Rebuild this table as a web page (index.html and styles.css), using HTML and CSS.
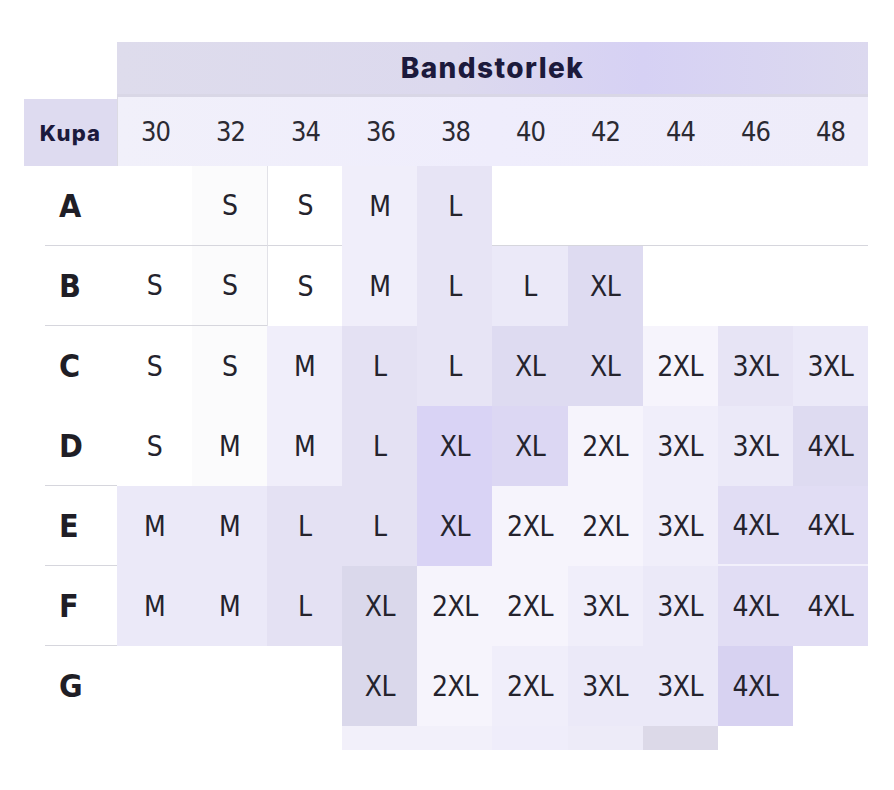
FILE: index.html
```html
<!DOCTYPE html>
<html lang="sv">
<head>
<meta charset="utf-8">
<title>Storleksguide</title>
<link rel="stylesheet" href="styles.css">
</head>
<body>
<div class="chart">
  <div class="corner"></div>
  <div class="band">Bandstorlek</div>

  <div class="kupa">Kupa</div>
  <div class="nums">
    <span>30</span><span>32</span><span>34</span><span>36</span><span>38</span>
    <span>40</span><span>42</span><span>44</span><span>46</span><span>48</span>
  </div>

  <div class="lbl sep">A</div>
  <div class="c w sep"></div><div class="c w2 sep">S</div><div class="c w vl sep">S</div><div class="c t1">M</div><div class="c t3">L</div>
  <div class="c w sep"></div><div class="c w sep"></div><div class="c w sep"></div><div class="c w sep"></div><div class="c w sep"></div>

  <div class="lbl sep">B</div>
  <div class="c w sep">S</div><div class="c w2 sep">S</div><div class="c w vl">S</div><div class="c t1">M</div><div class="c t3">L</div>
  <div class="c t2">L</div><div class="c t5">XL</div><div class="c w"></div><div class="c w"></div><div class="c w"></div>

  <div class="lbl">C</div>
  <div class="c w">S</div><div class="c w2">S</div><div class="c t1">M</div><div class="c t4">L</div><div class="c t3">L</div>
  <div class="c t5">XL</div><div class="c t5">XL</div><div class="c t0">2XL</div><div class="c t3">3XL</div><div class="c t2">3XL</div>

  <div class="lbl sep">D</div>
  <div class="c w">S</div><div class="c w2">M</div><div class="c t1">M</div><div class="c t4">L</div><div class="c p5">XL</div>
  <div class="c p4">XL</div><div class="c t0">2XL</div><div class="c t1">3XL</div><div class="c t2">3XL</div><div class="c t5">4XL</div>

  <div class="lbl sep">E</div>
  <div class="c t2">M</div><div class="c t2">M</div><div class="c t4">L</div><div class="c t4">L</div><div class="c p5">XL</div>
  <div class="c t0">2XL</div><div class="c t0">2XL</div><div class="c t1">3XL</div><div class="c p3 hl">4XL</div><div class="c p3 hl">4XL</div>

  <div class="lbl sep">F</div>
  <div class="c t2">M</div><div class="c t2">M</div><div class="c t4">L</div><div class="c t6">XL</div><div class="c t0">2XL</div>
  <div class="c t0">2XL</div><div class="c t1">3XL</div><div class="c t2">3XL</div><div class="c p3">4XL</div><div class="c p3">4XL</div>

  <div class="lbl">G</div>
  <div class="c w"></div><div class="c w"></div><div class="c w"></div><div class="c t6">XL</div><div class="c t0">2XL</div>
  <div class="c t1">2XL</div><div class="c t2">3XL</div><div class="c t2">3XL</div><div class="c p6">4XL</div><div class="c w"></div>

  <div class="corner"></div><div class="corner"></div><div class="corner"></div><div class="corner"></div>
  <div class="tail">
    <span class="t0"></span><span class="t0"></span><span class="t1"></span><span class="t2"></span><span class="t6"></span>
  </div>
</div>
</body>
</html>
```

FILE: styles.css
```css
html, body {
  margin: 0;
  padding: 0;
  background: #ffffff;
}

.chart {
  display: grid;
  grid-template-columns: 93px repeat(10, 75.1px);
  grid-template-rows: 55px 69px repeat(7, 80px) 24px;
  margin: 42px 0 0 24px;
  font-family: "DejaVu Sans Condensed", "DejaVu Sans", sans-serif;
  font-stretch: condensed;
  color: #25242e;
}

.band {
  grid-column: 2 / 12;
  display: flex;
  align-items: center;
  justify-content: center;
  height: 52px;
  border-bottom: 3px solid #d9d7e6;
  background: linear-gradient(90deg, #dedcec 0%, #dcd9ee 45%, #d6d1f4 70%, #dcd9ef 100%);
  font-family: "Inter", "Lato", sans-serif;
  font-stretch: normal;
  font-weight: 800;
  font-size: 28px;
  letter-spacing: 1.4px;
  color: #1c1a3c;
}

.kupa {
  margin-top: 2px;
  display: flex;
  align-items: center;
  justify-content: center;
  background: #dedbf0;
  font-family: "Inter", "Lato", sans-serif;
  font-stretch: normal;
  font-weight: 800;
  font-size: 22px;
  letter-spacing: 1.2px;
  color: #1c1a3c;
}

.nums {
  grid-column: 2 / 12;
  display: grid;
  grid-template-columns: repeat(10, 1fr);
  background: linear-gradient(90deg, #f1f0fa 0%, #efedfc 50%, #eeecf9 100%);
  border-left: 1px solid #dcdbe4;
}

.nums span {
  display: flex;
  align-items: center;
  justify-content: center;
  font-size: 27px;
  letter-spacing: -1px;
  color: #2b2a33;
}

.lbl {
  display: flex;
  align-items: center;
  margin-left: 21px;
  padding-left: 14px;
  font-size: 32px;
  font-weight: 600;
  letter-spacing: -1px;
  color: #1f1e26;
  background: #ffffff;
}

.lbl.sep {
  border-bottom: 1px solid #d6d6dd;
}

.c {
  display: flex;
  align-items: center;
  justify-content: center;
  font-size: 28px;
  letter-spacing: -0.5px;
  color: #24232d;
}

.c.sep {
  border-bottom: 1px solid #d6d6dd;
}

.c.vl {
  border-left: 1px solid #e2e2e8;
}

.w  { background: #ffffff; }
.w2 { background: #fbfbfc; }
.t0 { background: #f6f4fc; }
.t1 { background: #f0eefa; }
.t2 { background: #ebe9f8; }
.t3 { background: #e7e4f5; }
.t4 { background: #e4e1f3; }
.t5 { background: #dedbf1; }
.t6 { background: #dad8eb; }
.p3 { background: #e1ddf4; }
.p4 { background: #dcd7f3; }
.p5 { background: #d9d3f5; }
.p6 { background: #d7d2f1; }

.hl {
  border-bottom: 2px solid #f2f0fb;
}

.tail {
  grid-column: 5 / 10;
  display: grid;
  grid-template-columns: repeat(5, 1fr);
}

.tail span.t0 { background: #f2f0fa; }
.tail span.t1 { background: #efedfa; }
.tail span.t2 { background: #edebf8; }
.tail span.t6 { background: #dcd9e8; }
```
